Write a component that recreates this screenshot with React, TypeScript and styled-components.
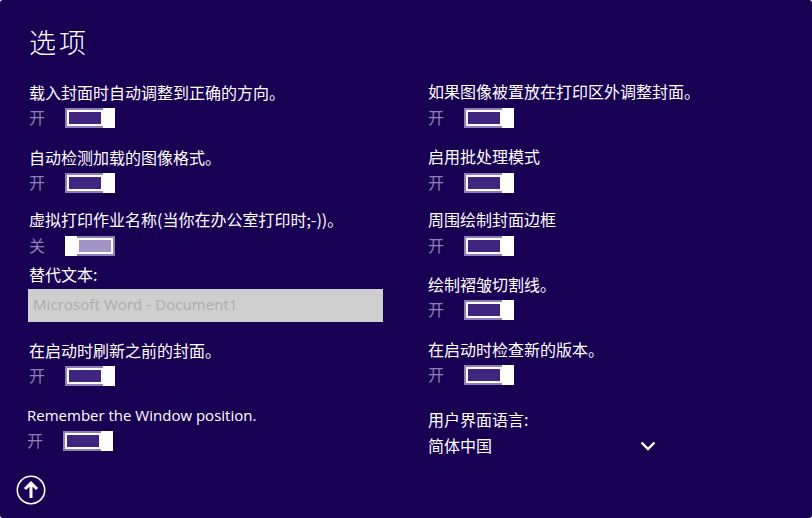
import React from 'react';
import styled, { createGlobalStyle } from 'styled-components';

const GlobalStyle = createGlobalStyle`
  html, body {
    margin: 0;
    padding: 0;
    background: #ffffff;
  }
`;

const Panel = styled.div`
  position: relative;
  box-sizing: border-box;
  width: 812px;
  height: 518px;
  padding: 24px 0 0 28px;
  overflow: hidden;
  border-radius: 3px;
  background: #180052;
  color: #ffffff;
  font-family: 'Open Sans', 'Noto Sans CJK SC', sans-serif;
  font-size: 16px;
`;

const Title = styled.h1`
  margin: 0 0 0 1px;
  height: 36px;
  font-family: 'Noto Sans CJK SC', sans-serif;
  font-size: 27px;
  font-weight: 300;
  line-height: 36px;
  letter-spacing: 3px;
`;

const Columns = styled.div`
  display: grid;
  grid-template-columns: 399px 300px;
`;

const Column = styled.div`
  display: flex;
  flex-direction: column;
`;

const Setting = styled.div<{ $top: number; $shift?: number }>`
  margin-top: ${(p) => p.$top}px;
  margin-left: ${(p) => p.$shift ?? 0}px;
`;

const Label = styled.div`
  height: 22px;
  padding-left: 1px;
  line-height: 20px;
  font-family: 'Noto Sans CJK SC', sans-serif;
  white-space: nowrap;
`;

const LatinLabel = styled(Label)`
  line-height: 22px;
  font-family: 'Open Sans', sans-serif;
  font-size: 15px;
`;

const SwitchRow = styled.div<{ $gap: number }>`
  display: flex;
  align-items: center;
  margin-top: ${(p) => p.$gap}px;
  padding-left: 1px;
  height: 20px;
`;

const SwitchState = styled.span`
  width: 36px;
  padding-bottom: 2px;
  color: #8f7fb8;
  font-family: 'Noto Sans CJK SC', sans-serif;
  line-height: 18px;
`;

const Track = styled.div<{ $on: boolean }>`
  display: flex;
  flex-direction: ${(p) => (p.$on ? 'row' : 'row-reverse')};
  width: 50px;
  height: 20px;
`;

const TrackBody = styled.div<{ $on: boolean }>`
  flex: 1;
  box-sizing: border-box;
  border: 2px solid #8f7fb8;
  ${(p) => (p.$on ? 'border-right: 0;' : 'border-left: 0;')}
  background: ${(p) => (p.$on ? '#3f2580' : '#a294c4')};
  box-shadow: inset 0 0 0 2px #ffffff;
`;

const Thumb = styled.div<{ $on: boolean }>`
  width: 12px;
  background: #ffffff;
`;

const TextField = styled.input`
  display: block;
  box-sizing: border-box;
  width: 355px;
  height: 33px;
  margin: 3px 0 0;
  padding: 0 5px 4px;
  border: 0;
  border-radius: 0;
  background: #cfcfcf;
  color: #ababab;
  font-family: 'Open Sans', sans-serif;
  font-size: 15px;
  letter-spacing: 0.08px;
  &:disabled {
    opacity: 1;
  }
`;

const LanguageRow = styled.div`
  display: flex;
  align-items: center;
  justify-content: space-between;
  box-sizing: border-box;
  width: 229px;
  height: 22px;
  margin-top: 3px;
  padding-left: 1px;
  font-family: 'Noto Sans CJK SC', sans-serif;

  svg {
    margin-top: 2px;
  }
`;

const UpButton = styled.button`
  position: absolute;
  left: 16px;
  top: 475px;
  width: 30px;
  height: 30px;
  padding: 0;
  border: 0;
  background: none;
`;

type SwitchProps = { on?: boolean; gap?: number };

const Switch = ({ on = true, gap = 4 }: SwitchProps) => (
  <SwitchRow $gap={gap}>
    <SwitchState>{on ? '开' : '关'}</SwitchState>
    <Track $on={on}>
      <TrackBody $on={on} />
      <Thumb $on={on} />
    </Track>
  </SwitchRow>
);

export default function App() {
  return (
    <>
      <GlobalStyle />
      <Panel>
        <Title>选项</Title>
        <Columns>
          <Column>
            <Setting $top={22}>
              <Label>载入封面时自动调整到正确的方向。</Label>
              <Switch />
            </Setting>
            <Setting $top={19}>
              <Label>自动检测加载的图像格式。</Label>
              <Switch />
            </Setting>
            <Setting $top={16}>
              <Label>虚拟打印作业名称(当你在办公室打印时;-))。</Label>
              <Switch on={false} gap={5} />
            </Setting>
            <Setting $top={8}>
              <Label>替代文本:</Label>
              <TextField disabled value="Microsoft Word - Document1" readOnly />
            </Setting>
            <Setting $top={18}>
              <Label>在启动时刷新之前的封面。</Label>
              <Switch />
            </Setting>
            <Setting $top={18} $shift={-2}>
              <LatinLabel>Remember the Window position.</LatinLabel>
              <Switch gap={5} />
            </Setting>
          </Column>
          <Column>
            <Setting $top={21}>
              <Label>如果图像被置放在打印区外调整封面。</Label>
              <Switch gap={5} />
            </Setting>
            <Setting $top={18}>
              <Label>启用批处理模式</Label>
              <Switch gap={5} />
            </Setting>
            <Setting $top={16}>
              <Label>周围绘制封面边框</Label>
              <Switch gap={5} />
            </Setting>
            <Setting $top={18}>
              <Label>绘制褶皱切割线。</Label>
              <Switch gap={4} />
            </Setting>
            <Setting $top={19}>
              <Label>在启动时检查新的版本。</Label>
              <Switch gap={4} />
            </Setting>
            <Setting $top={24}>
              <Label>用户界面语言:</Label>
              <LanguageRow>
                <span>简体中国</span>
                <svg width="16" height="10" viewBox="0 0 16 10" fill="none" stroke="#ffffff" strokeWidth="2.4">
                  <path d="M1.5 1.5 L8 8 L14.5 1.5" />
                </svg>
              </LanguageRow>
            </Setting>
          </Column>
        </Columns>
        <UpButton aria-label="Up">
          <svg width="30" height="30" viewBox="0 0 30 30" fill="none" stroke="#ffffff">
            <circle cx="15" cy="15" r="13.7" strokeWidth="1.6" />
            <path d="M15 23 V8.5 M9 14 L15 8 L21 14" strokeWidth="3" />
          </svg>
        </UpButton>
      </Panel>
    </>
  );
}
